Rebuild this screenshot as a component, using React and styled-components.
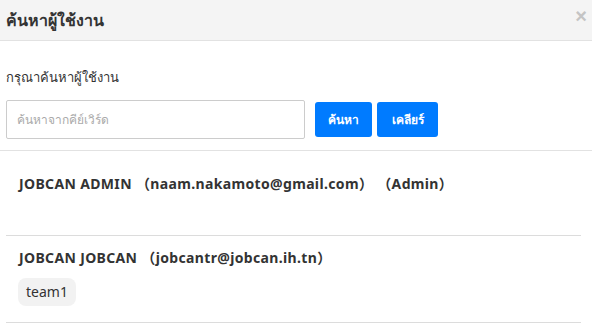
import styled, { createGlobalStyle } from 'styled-components';

const GlobalStyle = createGlobalStyle`
  body {
    margin: 0;
    background: #fff;
    font-family: Lato, "Noto Sans", "Noto Sans CJK JP", sans-serif;
    color: #333;
  }
`;

const Modal = styled.div`
  width: 592px;
  height: 324px;
  overflow: hidden;
  background: #fff;
`;

const Header = styled.div`
  display: flex;
  justify-content: space-between;
  align-items: flex-start;
  height: 41px;
  box-sizing: border-box;
  padding: 0 5px 0 6px;
  background: #f4f4f4;
  border-bottom: 1px solid #e2e2e2;
`;

const Title = styled.h4`
  margin: 0;
  line-height: 40px;
  font-size: 16px;
  font-weight: 700;
  color: #333;
`;

const Close = styled.button`
  border: 0;
  background: none;
  padding: 0;
  margin-top: 9px;
  font-size: 20px;
  line-height: 14px;
  font-weight: 700;
  color: #c4c4c4;
  cursor: pointer;
`;

const SearchArea = styled.div`
  padding: 26px 6px 11px;
  border-bottom: 1px solid #e2e2e2;
`;

const Label = styled.div`
  font-size: 13px;
  line-height: 20px;
  margin-bottom: 13px;
`;

const SearchRow = styled.div`
  display: flex;
  align-items: center;
  gap: 5px;
`;

const Input = styled.input`
  width: 299px;
  height: 39px;
  box-sizing: border-box;
  border: 1px solid #ccc;
  border-radius: 2px;
  padding: 0 10px;
  font-family: inherit;
  font-size: 12px;
  margin-right: 5px;
  &::placeholder {
    color: #aaa;
  }
`;

const Button = styled.button`
  height: 35px;
  width: ${props => props.w}px;
  border: 0;
  border-radius: 3px;
  background: #007bff;
  color: #fff;
  font-family: inherit;
  font-size: 12px;
  font-weight: 700;
  cursor: pointer;
`;

const List = styled.ul`
  list-style: none;
  margin: 0;
  padding: 0 11px 0 6px;
`;

const Item = styled.li`
  border-bottom: 1px solid #dcdcdc;
  padding: ${props => props.pad};
  min-height: ${props => props.h}px;
  box-sizing: border-box;
`;

const Name = styled.div`
  font-family: "Noto Sans", "Noto Sans CJK JP", sans-serif;
  font-size: 14px;
  font-weight: 700;
  line-height: 20px;
  letter-spacing: 0.35px;
  color: #333;
`;

const Badge = styled.span`
  display: inline-block;
  margin-top: 10px;
  margin-left: -1px;
  padding: 0 8px;
  height: 28px;
  line-height: 28px;
  font-family: "Noto Sans", sans-serif;
  font-size: 14px;
  border-radius: 8px;
  background: #f2f2f2;
  color: #333;
`;

const users = [
  { name: 'JOBCAN ADMIN', email: 'naam.nakamoto@gmail.com', role: 'Admin', teams: [] },
  { name: 'JOBCAN JOBCAN', email: 'jobcantr@jobcan.ih.tn', role: null, teams: ['team1'] },
];

export default function App() {
  return (
    <>
      <GlobalStyle />
      <Modal>
        <Header>
          <Title>ค้นหาผู้ใช้งาน</Title>
          <Close>×</Close>
        </Header>
        <SearchArea>
          <Label>กรุณาค้นหาผู้ใช้งาน</Label>
          <SearchRow>
            <Input placeholder="ค้นหาจากคีย์เวิร์ด" />
            <Button w={57}>ค้นหา</Button>
            <Button w={61}>เคลียร์</Button>
          </SearchRow>
        </SearchArea>
        <List>
          {users.map(({ name, email, role, teams }, i) => (
            <Item key={email} pad={i === 0 ? '23px 13px' : '12px 13px'} h={i === 0 ? 85 : 87}>
              <Name>
                {name} （{email}）{role && ` （${role}）`}
              </Name>
              {teams.map(t => (
                <Badge key={t}>{t}</Badge>
              ))}
            </Item>
          ))}
        </List>
      </Modal>
    </>
  );
}
